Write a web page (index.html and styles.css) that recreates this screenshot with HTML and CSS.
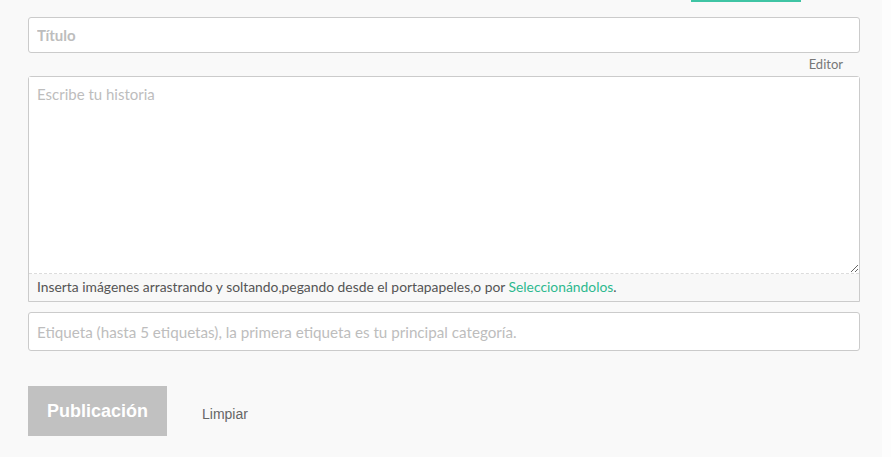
FILE: index.html
```html
<!DOCTYPE html>
<html lang="es">
<head>
<meta charset="utf-8">
<link rel="stylesheet" href="styles.css">
</head>
<body>
<div class="page">
  <div class="tabbar"><span class="tab-active"></span></div>
  <form class="composer">
    <input class="field title" type="text" placeholder="Título">
    <div class="editor-label">Editor</div>
    <div class="editor">
      <textarea class="story" placeholder="Escribe tu historia"></textarea>
      <div class="editor-foot">Inserta imágenes arrastrando y soltando,pegando desde el portapapeles,o por <a class="link" href="#">Seleccionándolos</a>.</div>
    </div>
    <input class="field tags" type="text" placeholder="Etiqueta (hasta 5 etiquetas), la primera etiqueta es tu principal categoría.">
    <div class="actions">
      <button class="publish" type="button">Publicación</button>
      <a class="clear" href="#">Limpiar</a>
    </div>
  </form>
</div>
</body>
</html>
```
FILE: styles.css
```css
html, body {
  margin: 0;
  padding: 0;
  background: #fdfdfd;
}
.page {
  width: 882px;
  height: 457px;
  background: #f9f9f9;
  font-family: "Source Sans Pro", Lato, "Open Sans", sans-serif;
}
.tabbar {
  height: 2px;
  position: relative;
}
.tab-active {
  position: absolute;
  left: 691px;
  top: 0;
  width: 110px;
  height: 2px;
  background: #3fc4a4;
}
.composer {
  padding: 15px 22px 0 28px;
  display: flex;
  flex-direction: column;
}
.field {
  box-sizing: border-box;
  width: 832px;
  border: 1px solid #cbcbcb;
  border-radius: 3px;
  background: #fff;
  padding: 0 8px;
  font-family: inherit;
  outline: none;
}
.field::placeholder { color: #bdbdbd; }
.title {
  height: 36px;
  font-size: 15px;
  font-weight: 700;
}
.editor-label {
  width: 815px;
  text-align: right;
  font-size: 13px;
  color: #777;
  height: 23px;
  line-height: 23px;
}
.editor {
  box-sizing: border-box;
  width: 832px;
  border: 1px solid #cbcbcb;
  border-radius: 3px 3px 0 0;
  background: #fff;
  display: flex;
  flex-direction: column;
}
.story {
  box-sizing: border-box;
  display: block;
  width: 100%;
  height: 197px;
  border: none;
  border-bottom: 1px dashed #dcdcdc;
  padding: 8px 8px;
  font-family: inherit;
  font-size: 15px;
  outline: none;
  resize: vertical;
  background: #fff;
}
.story::placeholder { color: #bdbdbd; }
.editor-foot {
  background: #f8f8f8;
  height: 27px;
  line-height: 26px;
  padding: 0 8px;
  font-size: 13.85px;
  color: #555;
}
.link {
  color: #2db98f;
  text-decoration: none;
}
.tags {
  margin-top: 10px;
  height: 39px;
  font-size: 15.2px;
}
.actions {
  margin-top: 35px;
  display: flex;
  align-items: center;
  gap: 35px;
}
.publish {
  width: 139px;
  height: 50px;
  border: none;
  background: #c1c1c1;
  color: #fff;
  font-family: "Liberation Sans", Arial, sans-serif;
  font-weight: 700;
  font-size: 18px;
  padding: 0;
}
.clear {
  font-family: "Liberation Sans", Arial, sans-serif;
  font-size: 14px;
  color: #666;
  text-decoration: none;
  padding-top: 6px;
}
```
